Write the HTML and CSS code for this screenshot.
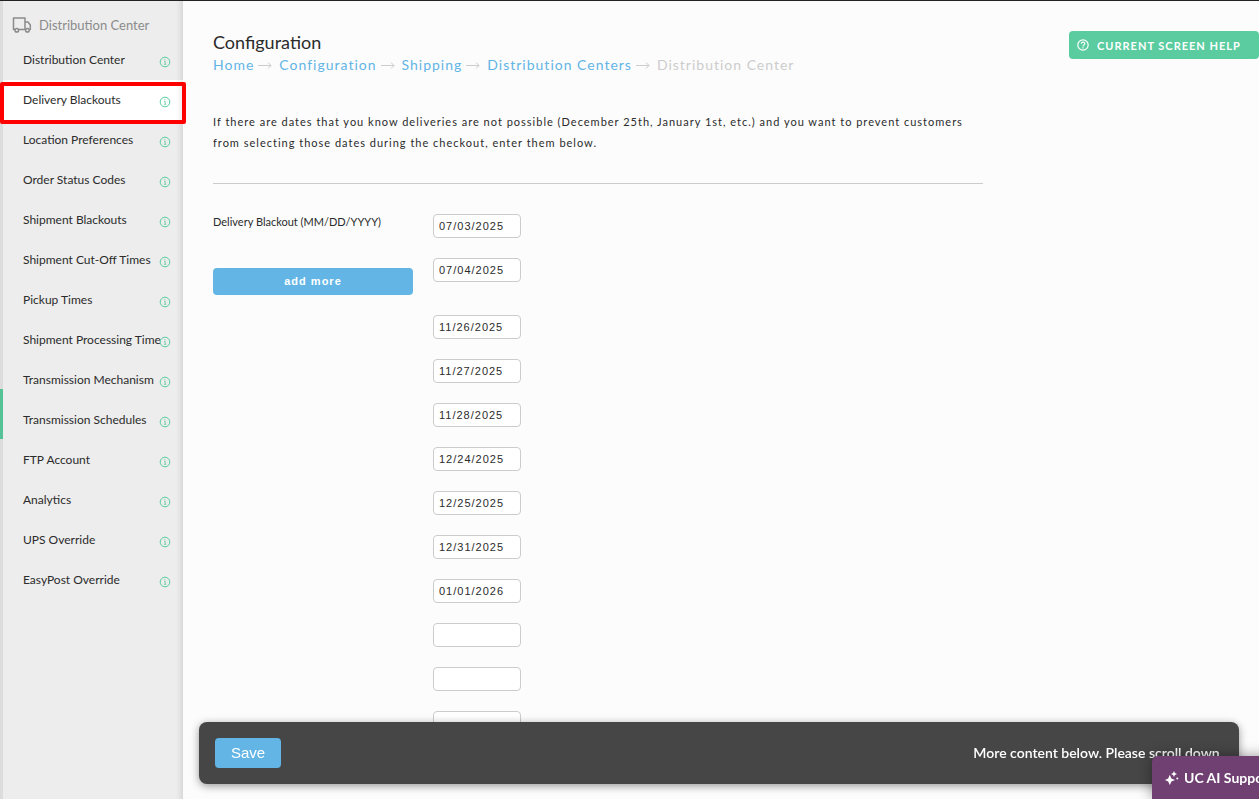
FILE: index.html
```html
<!DOCTYPE html>
<html lang="en">
<head>
<meta charset="utf-8">
<title>Configuration - Delivery Blackouts</title>
<link rel="stylesheet" href="styles.css">
</head>
<body>
<svg class="defs" aria-hidden="true">
  <symbol id="info" viewBox="0 0 12 12">
    <circle cx="6" cy="6" r="4.8" fill="none" stroke="currentColor" stroke-width="1"/>
    <path d="M5 5.400h1.200v2.800M5 8.300h2.200M5.300 3.700h1.100" fill="none" stroke="currentColor" stroke-width="0.8"/>
  </symbol>
  <symbol id="arrow" viewBox="0 0 14 10">
    <path d="M0 5.500H13M10 2.500L13 5.500L10 8.500" fill="none" stroke="currentColor"/>
  </symbol>
</svg>
<div class="app">
  <div class="rail"><span class="rail-mark"></span></div>
  <nav class="sidebar">
    <h2 class="sidebar-title">
      <svg class="truck" viewBox="0 0 20 18" fill="none" stroke="currentColor" stroke-width="1.5" stroke-linejoin="round">
        <path d="M3 13.500H1.500V2H13V13.500H6.500M13 6H16L18.300 9V13.500H17.500M13.800 13.500H13"/>
        <circle cx="4.800" cy="14.300" r="1.800"/><circle cx="15.400" cy="14.300" r="1.800"/>
      </svg>
      Distribution Center
    </h2>
    <ul class="menu">
      <li class="item"><a href="#">Distribution Center</a><svg class="info"><use href="#info"/></svg></li>
      <li class="item active"><a href="#">Delivery Blackouts</a><svg class="info"><use href="#info"/></svg></li>
      <li class="item"><a href="#">Location Preferences</a><svg class="info"><use href="#info"/></svg></li>
      <li class="item"><a href="#">Order Status Codes</a><svg class="info"><use href="#info"/></svg></li>
      <li class="item"><a href="#">Shipment Blackouts</a><svg class="info"><use href="#info"/></svg></li>
      <li class="item"><a href="#">Shipment Cut-Off Times</a><svg class="info"><use href="#info"/></svg></li>
      <li class="item"><a href="#">Pickup Times</a><svg class="info"><use href="#info"/></svg></li>
      <li class="item"><a href="#">Shipment Processing Time</a><svg class="info"><use href="#info"/></svg></li>
      <li class="item"><a href="#">Transmission Mechanism</a><svg class="info"><use href="#info"/></svg></li>
      <li class="item"><a href="#">Transmission Schedules</a><svg class="info"><use href="#info"/></svg></li>
      <li class="item"><a href="#">FTP Account</a><svg class="info"><use href="#info"/></svg></li>
      <li class="item"><a href="#">Analytics</a><svg class="info"><use href="#info"/></svg></li>
      <li class="item"><a href="#">UPS Override</a><svg class="info"><use href="#info"/></svg></li>
      <li class="item"><a href="#">EasyPost Override</a><svg class="info"><use href="#info"/></svg></li>
    </ul>
  </nav>
  <main class="content">
    <header class="page-head">
      <div>
        <h1 class="title">Configuration</h1>
        <nav class="crumbs">
          <a href="#">Home</a><svg class="arrow"><use href="#arrow"/></svg>
          <a href="#">Configuration</a><svg class="arrow"><use href="#arrow"/></svg>
          <a href="#">Shipping</a><svg class="arrow"><use href="#arrow"/></svg>
          <a href="#">Distribution Centers</a><svg class="arrow"><use href="#arrow"/></svg>
          <span>Distribution Center</span>
        </nav>
      </div>
      <button class="help" type="button">
        <svg class="help-icon" viewBox="0 0 12 12" fill="none" stroke="currentColor" stroke-width="1.2">
          <circle cx="6" cy="6" r="5.2"/><path d="M4.300 4.800C4.300 2.500 7.800 2.600 7.800 4.600C7.800 5.900 6 5.900 6 7.400M6 8.200V9.400"/>
        </svg>
        CURRENT SCREEN HELP
      </button>
    </header>
    <p class="intro">If there are dates that you know deliveries are not possible (December 25th, January 1st, etc.) and you want to prevent customers from selecting those dates during the checkout, enter them below.</p>
    <form class="form" id="blackouts">
      <div class="group">
        <div class="side">
          <label for="d1">Delivery Blackout (MM/DD/YYYY)</label>
          <button class="add" type="button">add more</button>
        </div>
        <div class="dates">
          <input id="d1" type="text" value="07/03/2025">
          <input type="text" aria-label="Blackout 2" value="07/04/2025">
        </div>
      </div>
      <div class="group">
        <div class="dates rest">
          <input type="text" aria-label="Blackout 3" value="11/26/2025">
          <input type="text" aria-label="Blackout 4" value="11/27/2025">
          <input type="text" aria-label="Blackout 5" value="11/28/2025">
          <input type="text" aria-label="Blackout 6" value="12/24/2025">
          <input type="text" aria-label="Blackout 7" value="12/25/2025">
          <input type="text" aria-label="Blackout 8" value="12/31/2025">
          <input type="text" aria-label="Blackout 9" value="01/01/2026">
          <input type="text" aria-label="Blackout 10">
          <input type="text" aria-label="Blackout 11">
          <input type="text" aria-label="Blackout 12">
        </div>
      </div>
    </form>
  </main>
</div>
<div class="savebar">
  <button class="save" type="submit" form="blackouts">Save</button>
  <span>More content below. Please scroll down.</span>
</div>
<button class="support" type="button">
  <svg class="spark" viewBox="0 0 14 14" fill="currentColor">
    <path d="M4.800 3.800L6.400 7.400L10 9L6.400 10.600L4.800 14L3.200 10.600L0 9L3.200 7.400Z"/>
    <path d="M9 0L9.900 2.100L12 3L9.900 3.900L9 6L8.100 3.900L6 3L8.100 2.100Z"/>
    <circle cx="12.300" cy="7.500" r="1"/>
  </svg>
  UC AI Support
</button>
</body>
</html>
```
FILE: styles.css
```css
* { box-sizing: border-box; }
body {
  margin: 0;
  height: 100vh;
  overflow: hidden;
  background: #fcfcfc;
  color: #2b2b2b;
  font-family: Lato, sans-serif;
  font-size: 12px;
}
a { color: inherit; text-decoration: none; }
button { border: 0; font-family: inherit; color: #fff; cursor: pointer; }
.defs { position: absolute; width: 0; height: 0; }
.app {
  display: flex;
  height: 100vh;
  overflow: hidden;
  border-top: 1px solid #222;
}
.rail {
  flex: 0 0 3px;
  padding-top: 388px;
  background: #dcdcdc;
}
.rail-mark { display: block; height: 50px; background: #54c197; }
.sidebar {
  flex: 0 0 180px;
  background: linear-gradient(to right, #ededed 173px, #e6e6e6 176px, #d9d9d9);
}
.sidebar-title {
  display: flex;
  align-items: center;
  gap: 7px;
  height: 39px;
  margin: 0;
  padding: 8px 0 0 9px;
  color: #8b8b8b;
  font-size: 13px;
  font-weight: 400;
}
.truck { width: 20px; height: 18px; }
.menu { margin: 0; padding: 0; list-style: none; }
.item {
  position: relative;
  display: flex;
  align-items: center;
  justify-content: space-between;
  height: 40px;
  padding: 0 12px 0 20px;
  font-size: 12px;
  white-space: nowrap;
}
.item a { width: 136px; padding-bottom: 2px; }
.info { flex: none; width: 12px; height: 12px; margin-top: 4px; color: #5acca0; }
.active { background: linear-gradient(to right, #fff 173px, #eee); }
.active::after {
  content: "";
  position: absolute;
  inset: 2px -3px -4px -3px;
  border: 4px solid #f00;
  border-radius: 2px;
}
.content { flex: 1; min-width: 0; padding: 29px 0 0 30px; }
.page-head { display: flex; justify-content: space-between; align-items: flex-start; }
.title { margin: 0; font-size: 18px; line-height: 24px; font-weight: 400; }
.crumbs {
  display: flex;
  align-items: center;
  color: #ccc;
  font-size: 14px;
  line-height: 22px;
  letter-spacing: 1px;
}
.crumbs a { color: #62b5e5; }
.arrow { width: 14px; height: 10px; margin: 0 7px 0 4px; }
.help {
  display: flex;
  align-items: center;
  gap: 8px;
  width: 190px;
  height: 28px;
  margin-top: 1px;
  padding: 0 8px;
  border-radius: 4px;
  background: #5acca0;
  font-size: 11px;
  font-weight: 700;
  letter-spacing: 1px;
  white-space: nowrap;
}
.help-icon { flex: none; width: 12px; height: 12px; }
.intro {
  max-width: 770px;
  margin: 35px 0 30px;
  padding-bottom: 30px;
  border-bottom: 1px solid #ccc;
  font-size: 11px;
  line-height: 21px;
  letter-spacing: 1px;
}
.group { display: flex; gap: 20px; margin-bottom: 20px; }
.side { display: flex; flex-direction: column; gap: 38px; width: 200px; }
.side label { font-size: 11px; line-height: 16px; }
.add {
  height: 27px;
  padding: 0 0 2px;
  border-radius: 4px;
  background: #62b5e5;
  font: 700 11px "Liberation Sans", Arial, sans-serif;
  letter-spacing: 1px;
}
.dates { display: flex; flex-direction: column; gap: 20px; }
.rest { margin-left: 220px; }
.dates input {
  width: 88px;
  height: 24px;
  padding: 0 5px;
  border: 1px solid #ccc;
  border-radius: 4px;
  background: #fff;
  color: #2b2b2b;
  font: 11px "Liberation Sans", Arial, sans-serif;
  letter-spacing: 1px;
}
.savebar {
  position: fixed;
  left: 199px;
  right: 20px;
  bottom: 15px;
  display: flex;
  align-items: center;
  justify-content: space-between;
  padding: 16px;
  border-radius: 8px;
  background: #464646;
  box-shadow: 0 2px 8px rgba(0, 0, 0, 0.4);
  color: #fff;
  font-size: 14px;
  font-weight: 600;
}
.savebar span { padding-bottom: 2px; }
.save {
  height: 30px;
  padding: 0 16px 1px;
  border-radius: 4px;
  background: #62b5e5;
  font: 15px "Liberation Sans", Arial, sans-serif;
}
.support {
  position: fixed;
  right: -24px;
  bottom: 0;
  display: flex;
  align-items: center;
  gap: 5px;
  width: 131px;
  height: 43px;
  padding: 0 13px;
  border-radius: 6px 0 0 0;
  background: #704073;
  box-shadow: 0 0 14px rgba(0, 0, 0, 0.4);
  font-size: 14px;
  font-weight: 700;
  white-space: nowrap;
}
.spark { flex: none; width: 14px; height: 14px; }
```
